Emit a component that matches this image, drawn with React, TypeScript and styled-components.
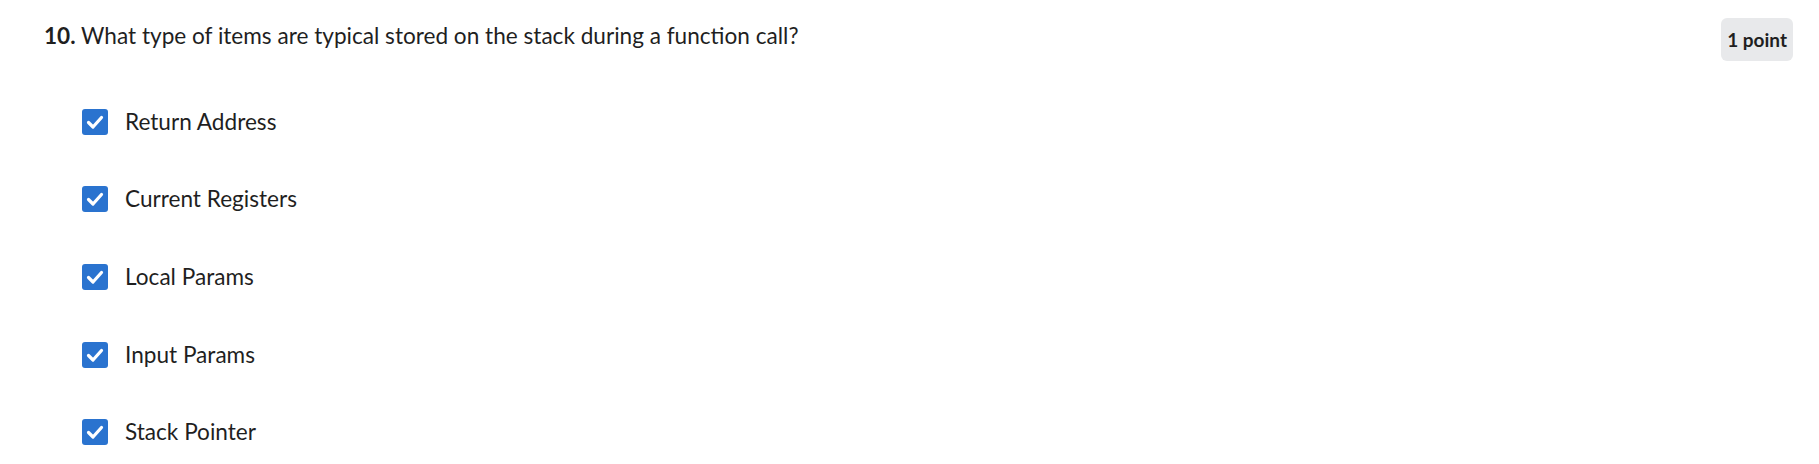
import React from "react";
import styled, { createGlobalStyle } from "styled-components";

const Global = createGlobalStyle`
  html, body { margin: 0; padding: 0; background: #ffffff; }
  body { font-family: Lato, "Noto Sans", sans-serif; color: #1f1f1f; }
`;

const Page = styled.div`
  width: 1819px;
  height: 464px;
  box-sizing: border-box;
  padding: 18px 26px 0 44px;
`;

const Header = styled.div`
  display: flex;
  justify-content: space-between;
  align-items: flex-start;
`;

const Question = styled.div`
  font-family: Lato, "Noto Sans", sans-serif;
  font-size: 22.6px;
  line-height: 30px;
  padding-top: 3px;
  color: #1f1f1f;
`;

const Num = styled.span`
  font-weight: 700;
`;

const Badge = styled.div`
  background: #e8e9eb;
  border-radius: 6px;
  height: 43px;
  padding: 0 6px;
  display: flex;
  align-items: center;
  font-weight: 700;
  font-size: 19px;
  color: #1f1f1f;
`;

const Options = styled.div`
  display: flex;
  flex-direction: column;
  padding-left: 38px;
  margin-top: 47.5px;
  gap: 51.7px;
`;

const Row = styled.label`
  display: flex;
  align-items: center;
  gap: 17px;
  height: 26px;
`;

const Box = styled.span`
  width: 26px;
  height: 26px;
  border-radius: 3px;
  background: #2a73cf;
  display: flex;
  align-items: center;
  justify-content: center;
  flex: none;
`;

const Label = styled.span`
  font-size: 22.6px;
  line-height: 26px;
  color: #1f1f1f;
`;

const items = [
  "Return Address",
  "Current Registers",
  "Local Params",
  "Input Params",
  "Stack Pointer",
];

const Check = () => (
  <svg width="20" height="20" viewBox="0 0 20 20" fill="none">
    <path d="M3.5 10.5l4.5 4.5 8.5-9.5" stroke="#fff" strokeWidth="3.2" strokeLinecap="round" strokeLinejoin="round" />
  </svg>
);

export default function App() {
  return (
    <Page>
      <Global />
      <Header>
        <Question>
          <Num>10.</Num> What type of items are typical stored on the stack during a function call?
        </Question>
        <Badge>1 point</Badge>
      </Header>
      <Options>
        {items.map((t) => (
          <Row key={t}>
            <Box>
              <Check />
            </Box>
            <Label>{t}</Label>
          </Row>
        ))}
      </Options>
    </Page>
  );
}
